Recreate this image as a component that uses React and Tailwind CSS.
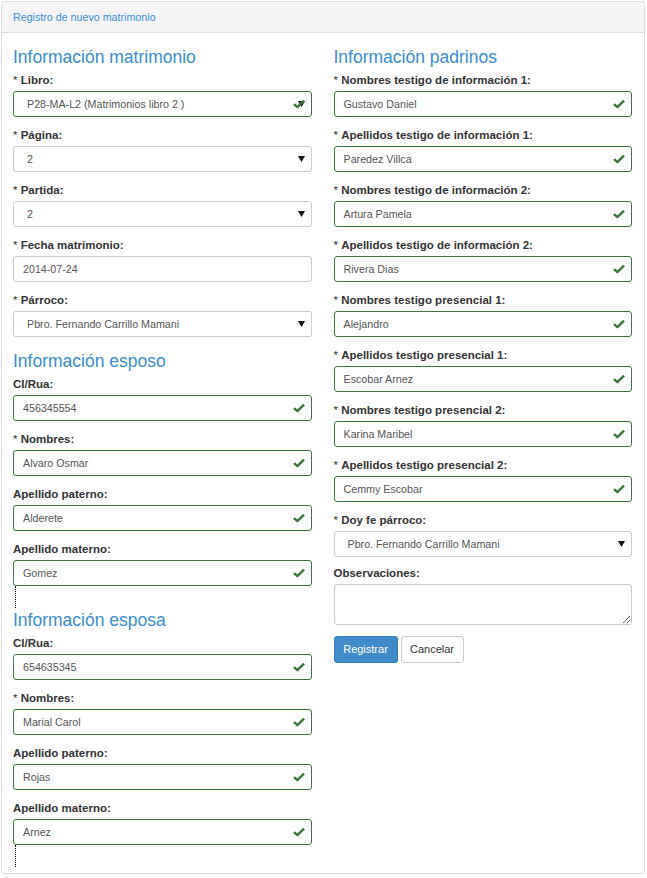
import React from "react";

const FONT = { fontFamily: '"Liberation Sans", Arial, sans-serif' };

function Check() {
  return (
    <svg
      width="12"
      height="9"
      viewBox="0 0 12 9"
      className="absolute right-[6px] top-1/2 -translate-y-1/2"
    >
      <path d="M1 4.6 L4.4 7.6 L11 1.2" stroke="#3c763d" strokeWidth="2.5" fill="none" strokeLinejoin="miter" />
    </svg>
  );
}

function Arrow() {
  return (
    <svg
      width="7"
      height="6"
      viewBox="0 0 7 6"
      className="absolute right-[6px] top-1/2 -translate-y-1/2"
    >
      <path d="M0 0 L7 0 L3.5 6 Z" fill="#111" />
    </svg>
  );
}

function Label({ text, req }) {
  return (
    <div className="h-[16px] leading-[16px] mb-[3px] text-[11.5px] font-bold text-[#333] whitespace-nowrap">
      {req && <span className="font-normal">* </span>}
      {text}
    </div>
  );
}

function Field({ label, req, value, kind = "ok", mb = "mb-[10px]" }) {
  const border = kind === "ok" || kind === "okselect" ? "border-[#3c763d]" : "border-[#ccc]";
  const pad = kind === "select" || kind === "okselect" ? "pl-[13px]" : "pl-[9px]";
  return (
    <div className={mb}>
      <Label text={label} req={req} />
      <div
        className={`relative h-[26px] border ${border} rounded-[3px] bg-white flex items-center ${pad} text-[10.7px] text-[#555]`}
      >
        <span className="whitespace-nowrap">{value}</span>
        {kind === "ok" && <Check />}
        {kind === "select" && <Arrow />}
        {kind === "okselect" && (
          <>
            <Arrow />
            <Check />
          </>
        )}
      </div>
    </div>
  );
}

function Heading({ children, cls = "" }) {
  return (
    <h3 className={`h-[20px] leading-[20px] text-[17.5px] font-normal text-[#3a8dd1] whitespace-nowrap ${cls}`}>
      {children}
    </h3>
  );
}

function Dotted() {
  return <div className="h-[22px] ml-[2px] border-l border-dotted border-black" />;
}

export default function App() {
  return (
    <div style={FONT} className="bg-white w-[647px] h-[878px] pt-[1px] pl-[1px]">
      <div className="w-[644px] border border-[#ddd] rounded-[3px] bg-white">
        <div className="h-[31px] border-b border-[#ddd] bg-[#f5f5f5] flex items-center pl-[11px] text-[10.7px] text-[#3a8dd1] rounded-t-[3px]">
          Registro de nuevo matrimonio
        </div>
        <div className="pl-[11px] pr-[12px] pt-[14px] pb-[6px] grid grid-cols-2 gap-x-[22px]">
          {/* Left column */}
          <div className="flex flex-col">
            <Heading cls="mb-[5px]">Información matrimonio</Heading>
            <Field label="Libro:" req value="P28-MA-L2 (Matrimonios libro 2 )" kind="okselect" />
            <Field label="Página:" req value="2" kind="select" />
            <Field label="Partida:" req value="2" kind="select" />
            <Field label="Fecha matrimonio:" req value="2014-07-24" kind="plain" />
            <Field label="Párroco:" req value="Pbro. Fernando Carrillo Mamani" kind="select" />

            <Heading cls="mt-[4px] mb-[5px]">Información esposo</Heading>
            <Field label="CI/Rua:" value="456345554" />
            <Field label="Nombres:" req value="Alvaro Osmar" />
            <Field label="Apellido paterno:" value="Alderete" />
            <Field label="Apellido materno:" value="Gomez" mb="mb-0" />
            <Dotted />

            <Heading cls="mt-[2px] mb-[5px]">Información esposa</Heading>
            <Field label="CI/Rua:" value="654635345" />
            <Field label="Nombres:" req value="Marial Carol" />
            <Field label="Apellido paterno:" value="Rojas" />
            <Field label="Apellido materno:" value="Arnez" mb="mb-0" />
            <Dotted />
          </div>

          {/* Right column */}
          <div className="flex flex-col">
            <Heading cls="mb-[5px]">Información padrinos</Heading>
            <Field label="Nombres testigo de información 1:" req value="Gustavo Daniel" />
            <Field label="Apellidos testigo de información 1:" req value="Paredez Villca" />
            <Field label="Nombres testigo de información 2:" req value="Artura Pamela" />
            <Field label="Apellidos testigo de información 2:" req value="Rivera Dias" />
            <Field label="Nombres testigo presencial 1:" req value="Alejandro" />
            <Field label="Apellidos testigo presencial 1:" req value="Escobar Arnez" />
            <Field label="Nombres testigo presencial 2:" req value="Karina Maribel" />
            <Field label="Apellidos testigo presencial 2:" req value="Cemmy Escobar" />
            <Field label="Doy fe párroco:" req value="Pbro. Fernando Carrillo Mamani" kind="select" mb="mb-[8px]" />
            <div className="mb-[11px]">
              <Label text="Observaciones:" />
              <textarea
                readOnly
                className="block w-full h-[41px] border border-[#ccc] rounded-[3px] bg-white resize-y outline-none"
              />
            </div>
            <div className="flex gap-[3px]">
              <button className="w-[64px] h-[27px] rounded-[3px] bg-[#428bca] border border-[#357ebd] text-white text-[11px]">
                Registrar
              </button>
              <button className="w-[63px] h-[27px] rounded-[3px] bg-white border border-[#ccc] text-[#333] text-[11px]">
                Cancelar
              </button>
            </div>
          </div>
        </div>
      </div>
    </div>
  );
}
